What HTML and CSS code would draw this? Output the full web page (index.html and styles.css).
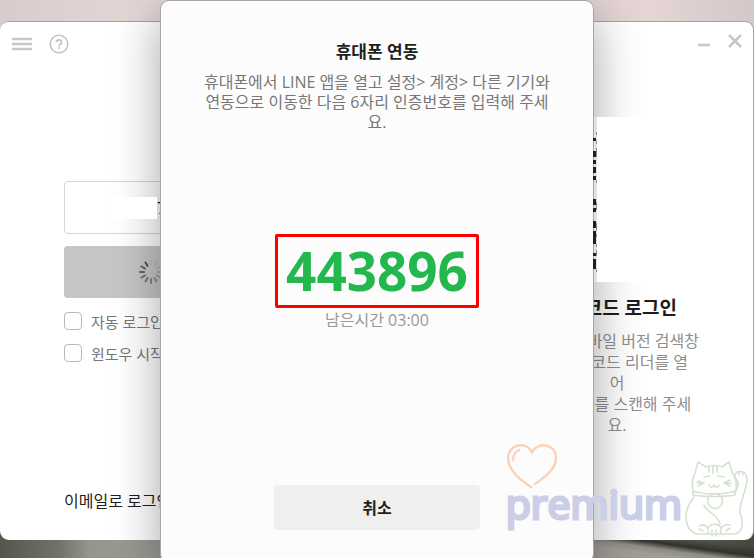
FILE: index.html
```html
<!DOCTYPE html>
<html lang="ko">
<head>
<meta charset="utf-8">
<meta name="viewport" content="width=device-width, initial-scale=1">
<title>LINE 로그인</title>
<link rel="stylesheet" href="styles.css">
</head>
<body>
<div class="desktop">
  <main class="window">
    <header class="titlebar">
      <button class="icon-button" type="button" aria-label="메뉴">
        <svg width="20" height="20" viewBox="0 0 20 20"><path d="M0 5h20M0 10h20M0 15h20" stroke="#c6c6c6" stroke-width="2.4"/></svg>
      </button>
      <button class="icon-button" type="button" aria-label="도움말">
        <svg width="20" height="20" viewBox="0 0 20 20" fill="none" stroke="#c4c4c4"><circle cx="10" cy="10" r="8.8" stroke-width="1.6"/><path d="M7.4 8.3c0-3.2 5.2-3.2 5.2 0 0 1.900-2.500 1.900-2.500 3.900" stroke-width="1.800"/><path d="M10.100 13.200v1.800" stroke-width="1.900"/></svg>
      </button>
      <span class="spacer"></span>
      <button class="icon-button" type="button" aria-label="최소화">
        <svg width="14" height="20" viewBox="0 0 14 20"><path d="M1 11h12" stroke="#c6c6c6" stroke-width="2.500"/></svg>
      </button>
      <button class="icon-button" type="button" aria-label="닫기">
        <svg width="14" height="20" viewBox="0 0 14 20"><path d="M1 1l12 12M13 1L1 13" stroke="#c6c6c6" stroke-width="2.500"/></svg>
      </button>
    </header>
    <div class="panes">
      <form class="login">
        <div class="field">
          <input class="account" type="text" value="7" aria-label="계정">
          <span class="mask"></span>
        </div>
        <button class="submit" type="button" aria-label="로그인 중">
          <svg width="24" height="24" viewBox="-12 -12 24 24" stroke-width="2" stroke-linecap="round">
            <path d="M0-7v-4" stroke="#bdbdbb"/>
            <path d="M0-7v-4" stroke="#bdbdbb" transform="rotate(30)"/>
            <path d="M0-7v-4" stroke="#b2b2b0" transform="rotate(60)"/>
            <path d="M0-7v-4" stroke="#a5a5a2" transform="rotate(90)"/>
            <path d="M0-7v-4" stroke="#999996" transform="rotate(120)"/>
            <path d="M0-7v-4" stroke="#8e8e8a" transform="rotate(150)"/>
            <path d="M0-7v-4" stroke="#83837e" transform="rotate(180)"/>
            <path d="M0-7v-4" stroke="#787872" transform="rotate(210)"/>
            <path d="M0-7v-4" stroke="#6e6e67" transform="rotate(240)"/>
            <path d="M0-7v-4" stroke="#65655d" transform="rotate(270)"/>
            <path d="M0-7v-4" stroke="#5c5c53" transform="rotate(300)"/>
            <path d="M0-7v-4" stroke="#54544a" transform="rotate(330)"/>
          </svg>
        </button>
        <label class="option"><input type="checkbox">자동 로그인</label>
        <label class="option"><input type="checkbox">윈도우 시작 시 자동 실행</label>
        <a class="email-link" href="#">이메일로 로그인</a>
      </form>
      <section class="qr">
        <svg class="qr-code" viewBox="0 0 166 165" role="img" aria-label="QR">
          <path fill="#e2e2e2" d="M60 0h3v165h-3z"/>
          <path fill="#fff" d="M63 0h155v165H63z"/>
          <path fill="#1c211e" d="M59 21h3v3h-3zM59 34h3v6h-3zM59 43h3v4h-3zM59 50h3v6h-3zM59 59h3v4h-3zM59 82h3v6h-3zM59 91h3v4h-3zM59 104h3v7h-3zM59 114h3v13h-3zM59 136h3v3h-3zM59 142h3v10h-3z"/>
          <path fill="#8a8a8a" d="M62 15h1v3h-1zM62 24h1v3h-1zM62 31h1v9h-1zM62 63h1v3h-1zM62 85h1v8h-1zM62 106h1v8h-1zM62 117h1v3h-1zM62 127h1v3h-1zM62 133h1v6h-1zM62 152h1v3h-1z"/>
        </svg>
        <h2>QR코드 로그인</h2>
        <p>LINE 모바일 버전 검색창<br>의 QR 코드 리더를 열<br>어<br>QR코드를 스캔해 주세<br>요.</p>
      </section>
    </div>
  </main>

  <div class="dialog" role="dialog" aria-labelledby="dialog-title">
    <h1 id="dialog-title">휴대폰 연동</h1>
    <p class="guide">휴대폰에서 LINE 앱을 열고 설정&gt; 계정&gt; 다른 기기와<br>연동으로 이동한 다음 6자리 인증번호를 입력해 주세<br>요.</p>
    <strong class="code">443896</strong>
    <p class="remaining">남은시간 03:00</p>
    <button class="cancel" type="button">취소</button>
  </div>

  <div class="brand">
    <svg class="heart" width="52" height="48" viewBox="0 0 52 48" fill="none" stroke="#f8d2b9" stroke-width="2.500" stroke-linecap="round">
      <path d="M25 44C14 37 2 27 2 15 2 2 19-3 26 9 33-2 50 1 50 15 50 26 39 34 29 41"/>
      <path d="M7 17C7 12 9 9 13 7"/>
    </svg>
    <span class="brand-name">premium</span>
    <svg class="cat" width="64" height="78" viewBox="0 0 64 78" fill="none" stroke="#d5e2cf" stroke-width="1.600" stroke-linecap="round" stroke-linejoin="round">
      <path d="M10 34C7 27 8 20 11 14L14 3 22 8C27 6 34 6 38 8L45 3 48 13C53 20 54 26 51 34"/>
      <path d="M25 8v5M29 7v7M33 8v5M20 18l6-1M34 17l6 1M14 22l6 2-6 3M20 24h-7M46 21l-6 3 6 3M40 24h7M25 26c1 3 4 3 5 0 1 3 4 3 5 0"/>
      <path d="M9 32C20 36 39 36 51 32L51 36C40 38 20 38 9 36Z"/>
      <circle cx="31" cy="42" r="7.500"/>
      <path d="M10 38C-1 51-1 71 13 75H51C59 73 60 64 56 54 55 44 62 33 63 21 64 11 51 10 51 17 51 22 55 20 54 27L51 34"/>
      <path d="M55 13v3M59 13v3M20 46C22 53 35 56 36 65M16 67C21 64 25 68 24 75M37 75C35 67 41 65 46 66M24 69C26 64 35 64 37 69M28 71v6M32 71v6M15 70l4 2M42 72l4-3"/>
    </svg>
  </div>
</div>
</body>
</html>
```
FILE: styles.css
```css
* {
  box-sizing: border-box;
}

body {
  margin: 0;
  overflow: hidden;
  color: #1e1e1e;
  font: 16px/20px "Open Sans", "Noto Sans CJK KR", sans-serif;
}

h1, h2, p {
  margin: 0;
}

button {
  padding: 0;
  border: 0;
  background: none;
  font: inherit;
  color: inherit;
}

svg {
  display: block;
}

.desktop {
  position: relative;
  display: flex;
  height: 100vh;
  padding: 21px 0 18px;
  overflow: hidden;
  background:
    linear-gradient(8deg, #a09c96 30%, #8f8c84 45%, #2f332b 60%, transparent 85%) bottom right / 161px 18px no-repeat,
    linear-gradient(90deg, #55564d 0, #74736b 60px, #96968e 90px, #9b9b94 160px, #8b8b82 593px, #5c5f53 690px, #45463d 100%) bottom / 100% 30px no-repeat,
    linear-gradient(90deg, #d9cccc, #e5d6d6 18%, #d5c9c9 50%, #e5d5d5 86%, #d5c8c8);
}

.window {
  flex: 1;
  display: flex;
  flex-direction: column;
  border: 1px solid #a5a3a2;
  border-width: 1px 1px 0 0;
  border-radius: 9px;
  background: #fff;
}

.titlebar {
  display: flex;
  gap: 17px;
  padding: 12px 11px 0 12px;
}

.spacer {
  flex: 1;
}

.panes {
  flex: 1;
  display: flex;
  justify-content: space-between;
  padding: 63px 53px 29px 64px;
}

.login {
  display: flex;
  flex-direction: column;
  width: 174px;
  padding-top: 64px;
  color: #777;
}

.field {
  display: grid;
  align-items: center;
  margin-bottom: 12px;
}

.account {
  grid-area: 1 / 1;
  width: 100%;
  height: 53px;
  padding: 0 0 0 92px;
  border: 1px solid #d5d5d5;
  border-radius: 4px;
  background: #fff;
  font: inherit;
}

.mask {
  grid-area: 1 / 1;
  z-index: 3;
  width: 48px;
  height: 22px;
  margin-left: 45px;
  background: #fff;
}

.submit {
  display: grid;
  place-items: center;
  height: 52px;
  margin-bottom: 13px;
  border-radius: 4px;
  background: #c6c6c6;
}

.option {
  display: flex;
  align-items: center;
  gap: 9px;
  height: 22px;
  margin-bottom: 10px;
  font-size: 15px;
  white-space: nowrap;
}

.option input {
  appearance: none;
  flex: none;
  width: 18px;
  height: 18px;
  margin: 0 0 2px;
  border: 1px solid #b8b8b8;
  border-radius: 4px;
  background: #fff;
}

.email-link {
  margin-top: auto;
  color: #1e1e1e;
  text-decoration: none;
}

.qr {
  width: 166px;
  color: #8f8f8f;
  font-size: 16px;
  line-height: 21px;
  display: flex;
  flex-direction: column;
  align-items: center;
  text-align: center;
  white-space: nowrap;
}

.qr-code {
  position: relative;
  z-index: 3;
  width: 100%;
  margin-bottom: 16px;
  overflow: visible;
}

.qr h2 {
  margin-bottom: 12px;
  color: #1e1e1e;
  font-size: 19px;
  line-height: 21px;
}

.dialog {
  position: absolute;
  z-index: 2;
  top: 0;
  right: 0;
  left: 0;
  display: flex;
  flex-direction: column;
  align-items: center;
  width: 434px;
  margin: 0 auto;
  padding: 41px 20px 32px;
  border: 1px solid #a9a5a4;
  border-radius: 9px;
  background: #fcfcfc;
  box-shadow: 0 16px 48px rgba(0, 0, 0, 0.36);
  text-align: center;
  white-space: nowrap;
}

.dialog h1 {
  margin-bottom: 10px;
  font-size: 17px;
  font-weight: 600;
  line-height: 20px;
}

.guide {
  margin-bottom: 102px;
  color: #777;
}

.code {
  margin-bottom: 2px;
  padding: 0 8px;
  border: 3px solid #f00;
  border-radius: 2px;
  color: #22b84e;
  font-size: 53px;
  line-height: 68px;
}

.remaining {
  margin-bottom: 155px;
  color: #999;
}

.cancel {
  width: 206px;
  height: 45px;
  border-radius: 4px;
  background: #efefef;
  font-weight: 600;
}

.brand {
  position: absolute;
  z-index: 4;
  right: 6px;
  bottom: 21px;
  display: grid;
  grid-template-columns: auto auto;
  align-items: end;
  pointer-events: none;
}

.heart {
  grid-column: 1 / 3;
  margin-bottom: -10px;
}

.brand-name {
  padding: 0 2px 12px 0;
  color: #cbcee7;
  font-size: 41px;
  line-height: 44px;
  -webkit-text-stroke: 3px #cbcee7;
}

.cat {
  margin-top: -22px;
}
```
